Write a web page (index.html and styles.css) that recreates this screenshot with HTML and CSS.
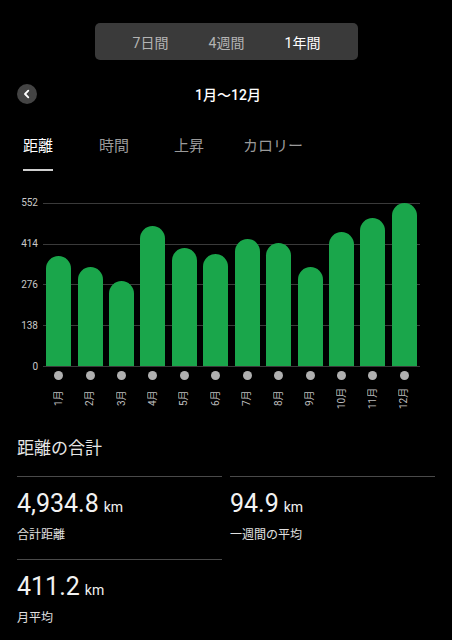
FILE: index.html
```html
<!DOCTYPE html>
<html lang="ja">
<head>
<meta charset="utf-8">
<title>距離</title>
<link rel="stylesheet" href="styles.css">
</head>
<body>
<div class="page">
  <div class="segmented">
    <div class="seg">7日間</div>
    <div class="seg">4週間</div>
    <div class="seg active">1年間</div>
  </div>

  <div class="header">
    <div class="back">
      <svg width="20" height="20" viewBox="0 0 20 20"><polyline points="11.3,6.6 8,10 11.3,13.4" fill="none" stroke="#fff" stroke-width="1.8" stroke-linecap="round" stroke-linejoin="round"/></svg>
    </div>
    <div class="title">1月〜12月</div>
    <div class="spacer"></div>
  </div>

  <div class="tabs">
    <div class="tab active"><span>距離</span></div>
    <div class="tab"><span>時間</span></div>
    <div class="tab"><span>上昇</span></div>
    <div class="tab"><span>カロリー</span></div>
  </div>

  <div class="chart">
    <div class="ylabels">
      <span>552</span><span>414</span><span>276</span><span>138</span><span>0</span>
    </div>
    <div class="plot">
      <div class="slot"><div class="bar" style="height:110px"></div></div>
      <div class="slot"><div class="bar" style="height:99px"></div></div>
      <div class="slot"><div class="bar" style="height:85px"></div></div>
      <div class="slot"><div class="bar" style="height:140px"></div></div>
      <div class="slot"><div class="bar" style="height:118px"></div></div>
      <div class="slot"><div class="bar" style="height:112px"></div></div>
      <div class="slot"><div class="bar" style="height:127px"></div></div>
      <div class="slot"><div class="bar" style="height:123px"></div></div>
      <div class="slot"><div class="bar" style="height:99px"></div></div>
      <div class="slot"><div class="bar" style="height:134px"></div></div>
      <div class="slot"><div class="bar" style="height:148px"></div></div>
      <div class="slot"><div class="bar" style="height:163px"></div></div>
    </div>
    <div class="xaxis">
      <div class="xitem"><i class="dot"></i><span class="mlabel">1月</span></div>
      <div class="xitem"><i class="dot"></i><span class="mlabel">2月</span></div>
      <div class="xitem"><i class="dot"></i><span class="mlabel">3月</span></div>
      <div class="xitem"><i class="dot"></i><span class="mlabel">4月</span></div>
      <div class="xitem"><i class="dot"></i><span class="mlabel">5月</span></div>
      <div class="xitem"><i class="dot"></i><span class="mlabel">6月</span></div>
      <div class="xitem"><i class="dot"></i><span class="mlabel">7月</span></div>
      <div class="xitem"><i class="dot"></i><span class="mlabel">8月</span></div>
      <div class="xitem"><i class="dot"></i><span class="mlabel">9月</span></div>
      <div class="xitem"><i class="dot"></i><span class="mlabel">10月</span></div>
      <div class="xitem"><i class="dot"></i><span class="mlabel">11月</span></div>
      <div class="xitem"><i class="dot"></i><span class="mlabel">12月</span></div>
    </div>
  </div>

  <div class="summary">
    <div class="summary-title">距離の合計</div>
    <div class="stats">
      <div class="stat">
        <div class="value">4,934.8<span class="unit">km</span></div>
        <div class="label">合計距離</div>
      </div>
      <div class="stat">
        <div class="value">94.9<span class="unit">km</span></div>
        <div class="label">一週間の平均</div>
      </div>
      <div class="stat">
        <div class="value">411.2<span class="unit">km</span></div>
        <div class="label">月平均</div>
      </div>
    </div>
  </div>
</div>
</body>
</html>
```

FILE: styles.css
```css
* { box-sizing: border-box; }
html, body {
  margin: 0;
  padding: 0;
  background: #000;
}
body {
  font-family: "Roboto", "Noto Sans CJK JP", sans-serif;
  color: #fff;
  width: 452px;
  height: 640px;
  overflow: hidden;
}
.page {
  padding-top: 23px;
}

/* segmented control */
.segmented {
  width: 263px;
  height: 37px;
  margin: 0 auto 0 95px;
  background: #3a3a3a;
  border-radius: 5px;
  display: flex;
  justify-content: center;
  align-items: center;
}
.seg {
  width: 76px;
  text-align: center;
  font-size: 14px;
  color: #b4b4b4;
}
.seg.active {
  color: #fff;
}

/* header */
.header {
  margin-top: 24px;
  padding: 0 17px;
  height: 20px;
  display: flex;
  align-items: center;
}
.back {
  width: 20px;
  height: 20px;
  border-radius: 50%;
  background: #444;
  display: flex;
  align-items: center;
  justify-content: center;
}
.back svg { display: block; }
.title {
  flex: 1;
  text-align: center;
  font-size: 14px;
  font-weight: 500;
  color: #fff;
  padding-left: 4px;
}
.spacer { width: 20px; }

/* tabs */
.tabs {
  margin-top: 32px;
  padding-left: 23px;
  display: grid;
  grid-template-columns: 76px 75px 69px auto;
}
.tab {
  font-size: 15px;
  line-height: 20px;
  color: #9a9a9a;
  justify-self: start;
  display: flex;
  flex-direction: column;
}
.tab.active {
  color: #fff;
}
.tab span {
  padding-bottom: 13px;
  border-bottom: 2px solid transparent;
}
.tab.active span {
  border-bottom-color: #cfcfcf;
}

/* chart */
.chart {
  margin-top: 32px;
  display: grid;
  grid-template-columns: 43px 377px;
}
.ylabels {
  height: 176px;
  margin: -6px 0;
  display: flex;
  flex-direction: column;
  justify-content: space-between;
  align-items: flex-end;
  padding-right: 5px;
}
.ylabels span {
  font-size: 10px;
  line-height: 12px;
  color: #c8c8c8;
}
.plot {
  height: 164px;
  border-bottom: 1px solid #3a3a3a;
  background-image: repeating-linear-gradient(to bottom, #3a3a3a 0, #3a3a3a 1px, transparent 1px, transparent 40.75px);
  display: flex;
  align-items: flex-end;
}
.slot {
  flex: 1;
  display: flex;
  justify-content: center;
  align-items: flex-end;
  height: 100%;
}
.bar {
  width: 25px;
  background: #1aa64b;
  border-radius: 12.5px 12.5px 0 0;
}
.xaxis {
  display: flex;
  grid-column: 2;
}
.xitem {
  flex: 1;
  display: flex;
  flex-direction: column;
  align-items: center;
}
.dot {
  display: block;
  width: 9px;
  height: 9px;
  border-radius: 50%;
  background: #b0b0b0;
  margin-top: 4px;
}
.mlabel {
  margin-top: 7px;
  height: 22px;
  writing-mode: vertical-rl;
  text-orientation: sideways;
  transform: rotate(180deg);
  font-size: 10px;
  line-height: 12px;
  color: #bdbdbd;
  text-align: center;
}

/* summary */
.summary {
  padding: 0 17px;
  margin-top: 27px;
}
.summary-title {
  font-size: 17px;
  line-height: 24px;
  color: #e6e6e6;
}
.stats {
  margin-top: 16px;
  display: grid;
  grid-template-columns: 205px 205px;
  column-gap: 8px;
}
.stat {
  border-top: 1px solid #4a4a4a;
  padding-top: 13px;
  padding-bottom: 16px;
}
.value {
  display: flex;
  align-items: baseline;
  height: 28px;
  font-size: 25px;
  line-height: 28px;
  color: #f2f2f2;
}
.unit {
  font-size: 14px;
  line-height: 1;
  margin-left: 5px;
}
.label {
  margin-top: 9px;
  font-size: 12px;
  line-height: 16px;
  height: 16px;
  color: #e0e0e0;
}
```
